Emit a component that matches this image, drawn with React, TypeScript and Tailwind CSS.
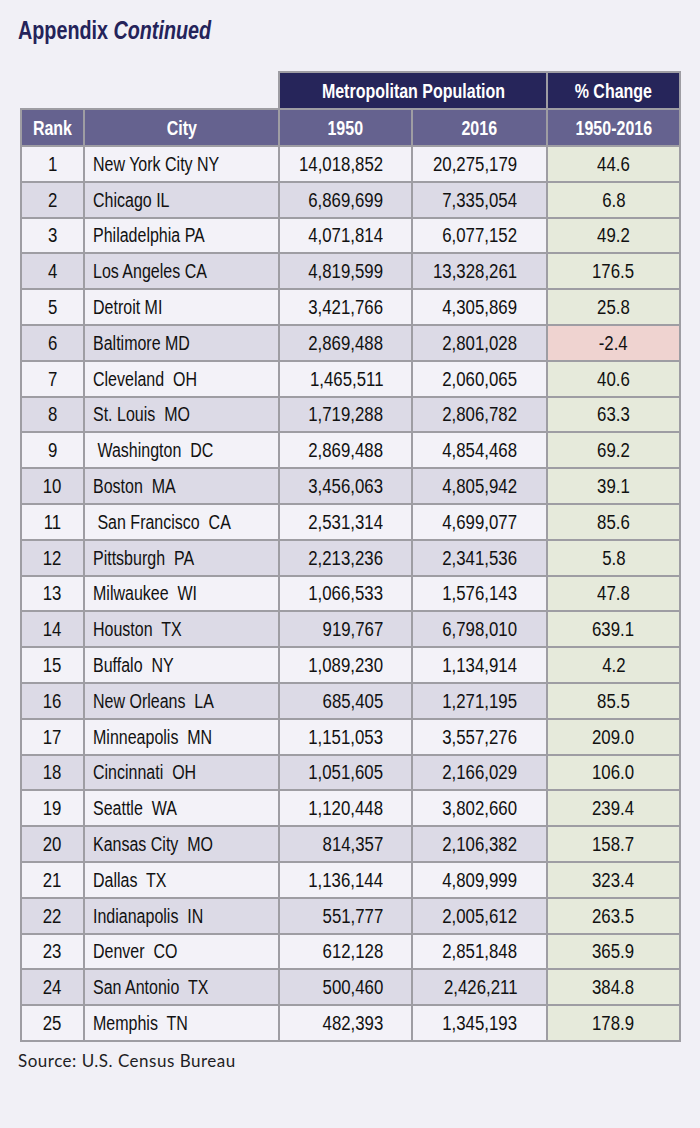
import React from "react";

type Row = [string, string, string, string, string];

const rows: Row[] = [
  ["1", "New York City NY", "14,018,852", "20,275,179", "44.6"],
  ["2", "Chicago IL", "6,869,699", "7,335,054", "6.8"],
  ["3", "Philadelphia PA", "4,071,814", "6,077,152", "49.2"],
  ["4", "Los Angeles CA", "4,819,599", "13,328,261", "176.5"],
  ["5", "Detroit MI", "3,421,766", "4,305,869", "25.8"],
  ["6", "Baltimore MD", "2,869,488", "2,801,028", "-2.4"],
  ["7", "Cleveland  OH", "1,465,511", "2,060,065", "40.6"],
  ["8", "St. Louis  MO", "1,719,288", "2,806,782", "63.3"],
  ["9", " Washington  DC", "2,869,488", "4,854,468", "69.2"],
  ["10", "Boston  MA", "3,456,063", "4,805,942", "39.1"],
  ["11", " San Francisco  CA", "2,531,314", "4,699,077", "85.6"],
  ["12", "Pittsburgh  PA", "2,213,236", "2,341,536", "5.8"],
  ["13", "Milwaukee  WI", "1,066,533", "1,576,143", "47.8"],
  ["14", "Houston  TX", "919,767", "6,798,010", "639.1"],
  ["15", "Buffalo  NY", "1,089,230", "1,134,914", "4.2"],
  ["16", "New Orleans  LA", "685,405", "1,271,195", "85.5"],
  ["17", "Minneapolis  MN", "1,151,053", "3,557,276", "209.0"],
  ["18", "Cincinnati  OH", "1,051,605", "2,166,029", "106.0"],
  ["19", "Seattle  WA", "1,120,448", "3,802,660", "239.4"],
  ["20", "Kansas City  MO", "814,357", "2,106,382", "158.7"],
  ["21", "Dallas  TX", "1,136,144", "4,809,999", "323.4"],
  ["22", "Indianapolis  IN", "551,777", "2,005,612", "263.5"],
  ["23", "Denver  CO", "612,128", "2,851,848", "365.9"],
  ["24", "San Antonio  TX", "500,460", "2,426,211", "384.8"],
  ["25", "Memphis  TN", "482,393", "1,345,193", "178.9"],
];

function L({ children }: { children: React.ReactNode }) {
  return <span className="inline-block whitespace-pre scale-x-[0.8] origin-left">{children}</span>;
}
function C({ children }: { children: React.ReactNode }) {
  return <span className="inline-block whitespace-pre scale-x-[0.8] origin-center">{children}</span>;
}
function N({ children }: { children: React.ReactNode }) {
  return <span className="inline-block whitespace-pre scale-x-[0.84] origin-center">{children}</span>;
}
function R({ children }: { children: React.ReactNode }) {
  return <span className="inline-block whitespace-pre scale-x-[0.84] origin-right">{children}</span>;
}

export default function App() {
  return (
    <div className="w-[700px] h-[1128px] bg-[#f1f0f6] font-['Liberation_Sans',Arial,sans-serif] text-[#111]">
      <div className="pl-[18px] pt-[16px] h-[71px]">
        <h1 className="text-[25px] leading-[29px] font-bold text-[#24235a]">
          <span className="inline-block whitespace-pre scale-x-[0.79] origin-left">
            Appendix <span className="italic">Continued</span>
          </span>
        </h1>
      </div>

      <div className="ml-[20px] w-[661px]">
        <div className="ml-[258px] flex gap-[2px] bg-[#9e9da3] px-[2px] pt-[2px]">
          <div className="w-[266px] h-[35px] bg-[#26255a] text-white font-bold text-[20px] flex items-center justify-center">
            <C>Metropolitan Population</C>
          </div>
          <div className="w-[131px] h-[35px] bg-[#26255a] text-white font-bold text-[20px] flex items-center justify-center">
            <C>% Change</C>
          </div>
        </div>

        <div className="grid grid-cols-[61px_193px_131px_133px_131px] gap-[2px] bg-[#9e9da3] p-[2px] text-[20px] leading-[24px]">
          {["Rank", "City", "1950", "2016", "1950-2016"].map((h) => (
            <div
              key={h}
              className="h-[35px] bg-[#65628f] text-white font-bold flex items-center justify-center"
            >
              <C>{h}</C>
            </div>
          ))}
          {rows.map((r, i) => {
            const even = i % 2 === 1;
            const bg = even ? "bg-[#dcdae6]" : "bg-[#f3f2f8]";
            const neg = r[4].startsWith("-");
            return (
              <React.Fragment key={r[0]}>
                <div className={`h-[33.8px] ${bg} flex items-center justify-center`}>
                  <N>{r[0]}</N>
                </div>
                <div className={`h-[33.8px] ${bg} flex items-center pl-[8px]`}>
                  <L>{r[1]}</L>
                </div>
                <div className={`h-[33.8px] ${bg} flex items-center justify-end pr-[28px]`}>
                  <R>{r[2]}</R>
                </div>
                <div className={`h-[33.8px] ${bg} flex items-center justify-end pr-[29px]`}>
                  <R>{r[3]}</R>
                </div>
                <div
                  className={`h-[33.8px] ${neg ? "bg-[#efd3d0]" : "bg-[#e6eadb]"} flex items-center justify-center`}
                >
                  <N>{r[4]}</N>
                </div>
              </React.Fragment>
            );
          })}
        </div>
      </div>

      <p className="pl-[18px] pt-[8px] text-[17px] leading-[22px] tracking-[0.5px] text-[#1e1e24] font-['Lato',sans-serif]">
        Source: U.S. Census Bureau
      </p>
    </div>
  );
}
